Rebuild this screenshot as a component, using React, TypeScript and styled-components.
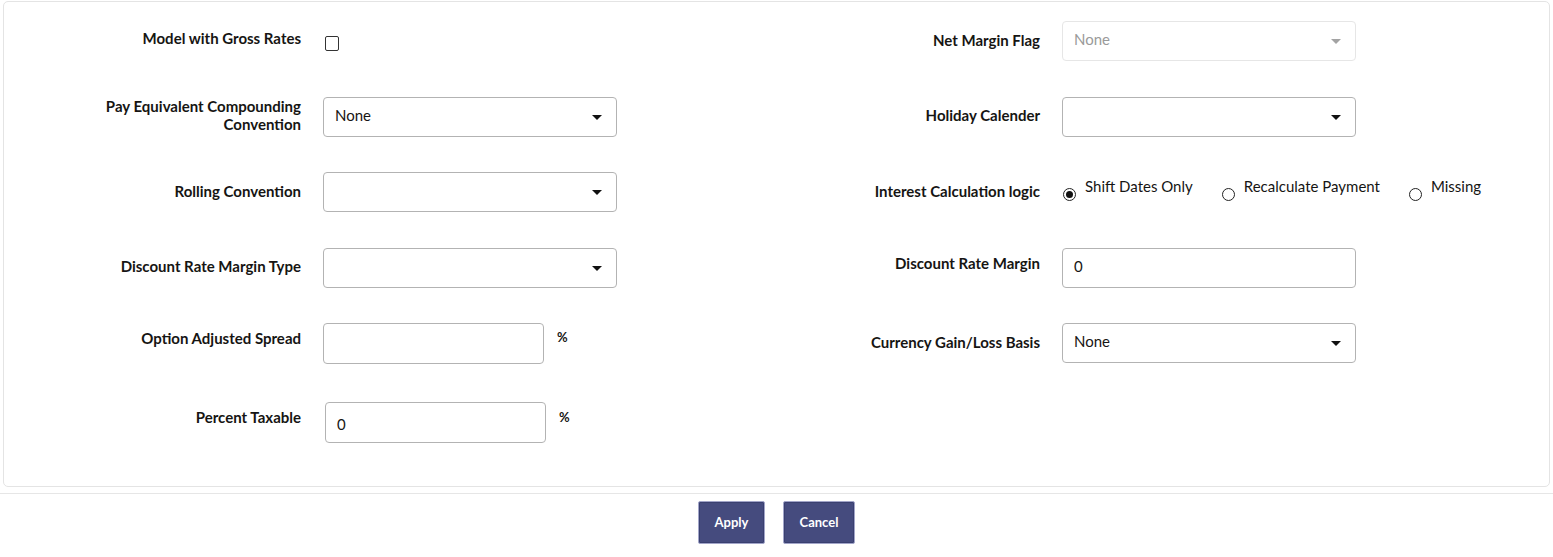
import React from "react";
import styled, { createGlobalStyle } from "styled-components";

const Global = createGlobalStyle`
  html, body { margin: 0; padding: 0; background: #fff; }
  body { font-family: Lato, "Noto Sans", sans-serif; color: #161513; }
  * { box-sizing: border-box; }
`;

const Page = styled.div`
  width: 1553px;
  height: 557px;
  display: flex;
  flex-direction: column;
  background: #fff;
`;

const Panel = styled.div`
  margin: 1px 3px 0 3px;
  height: 486px;
  border: 1px solid #e4e4e4;
  border-radius: 5px;
  padding: 19px 0 0 0;
`;

const Grid = styled.div`
  display: grid;
  grid-template-columns: 297px 294px 401px 294px;
  grid-auto-rows: 40px;
  column-gap: 22px;
  row-gap: 35.5px;
`;

const Label = styled.div<{ $up?: number }>`
  align-self: center;
  text-align: right;
  font-weight: 700;
  font-size: 15px;
  line-height: 18px;
  color: #161513;
  white-space: nowrap;
  margin-bottom: ${(p) => p.$up ?? 3}px;
`;

const Control = styled.div<{ $down?: number }>`
  display: flex;
  align-items: center;
  gap: 13px;
  height: 40px;
  margin-top: ${(p) => p.$down ?? 0}px;
`;

const SelectBox = styled.div<{ $disabled?: boolean }>`
  width: 294px;
  height: 40px;
  flex: none;
  border: 1px solid ${(p) => (p.$disabled ? "#e6e6e6" : "#b3b3b3")};
  border-radius: 4px;
  display: flex;
  align-items: center;
  justify-content: space-between;
  padding: 0 14px 0 11px;
  font-size: 15px;
  color: ${(p) => (p.$disabled ? "#9a9a9a" : "#161513")};
  background: #fff;
`;

const Value = styled.span`
  margin-bottom: 4px;
`;

const Arrow = styled.span<{ $disabled?: boolean }>`
  width: 0;
  height: 0;
  border-left: 5px solid transparent;
  border-right: 5px solid transparent;
  border-top: 5px solid ${(p) => (p.$disabled ? "#a3a3a3" : "#111")};
  margin-top: 1px;
`;

const Checkbox = styled.span`
  width: 14px;
  height: 15px;
  border: 1.5px solid #333;
  border-radius: 2px;
  margin-left: 2px;
  margin-top: 4px;
`;

const Percent = styled.span`
  font-size: 13px;
  font-weight: 700;
  align-self: flex-start;
  margin-top: 6px;
`;

const RadioGroup = styled.div`
  display: flex;
  align-items: center;
  margin-left: 1px;
  white-space: nowrap;
`;

const RadioItem = styled.label<{ $gap: number }>`
  display: flex;
  align-items: flex-start;
  gap: 9px;
  margin-right: ${(p) => p.$gap}px;
  font-size: 15px;
  color: #161513;
`;

const RadioCircle = styled.span<{ $checked?: boolean }>`
  width: 13px;
  height: 13px;
  flex: none;
  border: 1.5px solid #222;
  border-radius: 50%;
  display: flex;
  align-items: center;
  justify-content: center;
  margin-top: 5px;
  &::after {
    content: "";
    width: 7px;
    height: 7px;
    border-radius: 50%;
    background: ${(p) => (p.$checked ? "#111" : "transparent")};
  }
`;

const RadioText = styled.span`
  line-height: 16px;
  margin-top: -5px;
`;

const Empty = styled.div``;

const Footer = styled.div`
  margin-top: 6px;
  border-top: 1px solid #e6e6e6;
  display: flex;
  justify-content: center;
  gap: 18px;
  padding-top: 7px;
`;

const Button = styled.button<{ $w: number }>`
  width: ${(p) => p.$w}px;
  height: 43px;
  background: #454b7e;
  border: 1px solid #a2a5c9;
  box-shadow: inset 0 0 0 1px #3a4070;
  border-radius: 2px;
  color: #fff;
  font-family: Lato, "Noto Sans", sans-serif;
  font-weight: 700;
  font-size: 13px;
  padding: 0 0 2px 0;
`;

const TextInput = styled.div<{ $shift?: number }>`
  width: 221px;
  height: 41px;
  flex: none;
  border: 1px solid #b3b3b3;
  border-radius: 4px;
  display: flex;
  align-items: center;
  padding: 2px 11px 0;
  font-size: 15px;
  margin-left: ${(p) => p.$shift ?? 0}px;
`;

const Select = ({ value, disabled }: { value?: string; disabled?: boolean }) => (
  <SelectBox $disabled={disabled}>
    <Value>{value ?? ""}</Value>
    <Arrow $disabled={disabled} />
  </SelectBox>
);

export default function App() {
  return (
    <Page>
      <Global />
      <Panel>
        <Grid>
          <Label $up={7}>Model with Gross Rates</Label>
          <Control>
            <Checkbox />
          </Control>
          <Label>Net Margin Flag</Label>
          <Control>
            <Select value="None" disabled />
          </Control>

          <Label>
            Pay Equivalent Compounding
            <br />
            Convention
          </Label>
          <Control>
            <Select value="None" />
          </Control>
          <Label>Holiday Calender</Label>
          <Control>
            <Select />
          </Control>

          <Label>Rolling Convention</Label>
          <Control>
            <Select />
          </Control>
          <Label $up={2}>Interest Calculation logic</Label>
          <Control>
            <RadioGroup>
              <RadioItem $gap={29}>
                <RadioCircle $checked />
                <RadioText>Shift Dates Only</RadioText>
              </RadioItem>
              <RadioItem $gap={29}>
                <RadioCircle />
                <RadioText>Recalculate Payment</RadioText>
              </RadioItem>
              <RadioItem $gap={0}>
                <RadioCircle />
                <RadioText>Missing</RadioText>
              </RadioItem>
            </RadioGroup>
          </Control>

          <Label>Discount Rate Margin Type</Label>
          <Control>
            <Select />
          </Control>
          <Label $up={9}>Discount Rate Margin</Label>
          <Control>
            <SelectBox>
              <Value>0</Value>
            </SelectBox>
          </Control>

          <Label $up={10}>Option Adjusted Spread</Label>
          <Control>
            <TextInput />
            <Percent>%</Percent>
          </Control>
          <Label>Currency Gain/Loss Basis</Label>
          <Control>
            <Select value="None" />
          </Control>

          <Label $up={3}>Percent Taxable</Label>
          <Control $down={4}>
            <TextInput $shift={2}>0</TextInput>
            <Percent>%</Percent>
          </Control>
          <Empty />
          <Empty />
        </Grid>
      </Panel>
      <Footer>
        <Button $w={67}>Apply</Button>
        <Button $w={72}>Cancel</Button>
      </Footer>
    </Page>
  );
}
